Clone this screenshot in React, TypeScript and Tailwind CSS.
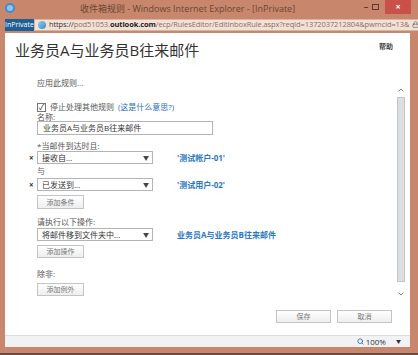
import { ChevronUp, ChevronDown, Lock, Search } from 'lucide-react';

const font = { fontFamily: '"Open Sans", "Noto Sans CJK SC", sans-serif' };

function Select({ label }: { label: string }) {
  return (
    <div className="flex h-[13px] w-[116px] items-center justify-between border border-[#b4b4b4] bg-white pl-[4px] pr-[3px] text-[8px] leading-none text-[#333]">
      <span>{label}</span>
      <span className="text-[6px] text-[#444]">▼</span>
    </div>
  );
}

function Btn({ label, w = 'w-[47px]', h = 'h-[14px]' }: { label: string; w?: string; h?: string }) {
  return (
    <div className={`flex ${w} ${h} items-center justify-center border border-[#c4c4c4] bg-gradient-to-b from-white to-[#eeeeee] text-[7px] leading-none text-[#777]`}>
      {label}
    </div>
  );
}

export default function App() {
  return (
    <div className="flex h-[355px] w-[418px] flex-col overflow-hidden bg-[#c8876c]" style={font}>
      {/* title bar */}
      <div className="relative flex h-[16px] items-center">
        <div className="ml-[5px] h-[10px] w-[10px] rounded-full border-2 border-[#3a8fd6] bg-[#8cc6ef]" />
        <div className="flex-1 text-center text-[9px] leading-none text-[#6a4636]">
          收件箱规则 - Windows Internet Explorer - [InPrivate]
        </div>
        <div className="flex h-[16px] items-start">
          <span className="mt-[2px] w-[12px] text-center text-[9px] font-bold leading-none text-[#5a3a2e]">–</span>
          <span className="mr-[6px] mt-[4px] h-[6px] w-[7px] border border-[#5a3a2e]" />
          <div className="flex h-[14px] w-[26px] items-center justify-center bg-[#c9514a] text-[9px] font-bold text-white">×</div>
          <span className="w-[7px]" />
        </div>
      </div>
      {/* address bar */}
      <div className="flex h-[17px] items-center pl-[5px] pr-[6px]">
        <div className="flex h-[12px] w-[33px] items-center justify-center bg-[#1e5f96] text-[7px] leading-none text-white">InPrivate</div>
        <div className="flex h-[12px] flex-1 items-center gap-[3px] border border-[#d9b3a2] bg-[#f2e1d7] pl-[3px] pr-[2px] text-[7.5px] leading-none text-[#8a7066]">
          <span className="h-[8px] w-[8px] shrink-0 rounded-full bg-gradient-to-br from-[#8fd1f2] to-[#3c88c2]" />
          <span className="flex-1 whitespace-nowrap tracking-[-0.1px]">
            <span className="text-[#333]">https://</span>pod51053.<span className="font-bold text-[#222]">outlook.com</span>/ecp/RulesEditor/EditInboxRule.aspx?reqId=1372037212804&amp;pwmcid=13&amp;
          </span>
          <Lock size={7} className="shrink-0 text-[#555]" />
        </div>
      </div>
      {/* page */}
      <div className="mx-[5px] mr-[8px] flex h-[302px] flex-col bg-white">
        <div className="flex h-[37px] items-start justify-between pl-[10px] pr-[17px] pt-[9px]">
          <div className="text-[15px] leading-[17px] text-[#333]">业务员A与业务员B往来邮件</div>
          <div className="pt-[1px] text-[7px] font-bold leading-none text-[#444]">帮助</div>
        </div>
        <div className="flex h-[233px]">
          <div className="flex flex-1 flex-col pl-[32px] text-[8px] leading-none text-[#555]">
            <div className="mt-[9px] h-[10px]">应用此规则...</div>
            <div className="mt-[13px] flex h-[10px] items-center gap-[4px]">
              <div className="flex h-[9px] w-[9px] items-center justify-center border border-[#777] bg-white text-[8px] leading-none text-[#222]">✓</div>
              <span className="text-[#555]">停止处理其他规则</span>
              <span className="text-[#2a6fb8]">(这是什么意思?)</span>
            </div>
            <div className="flex h-[9px] items-center">名称:</div>
            <div className="flex h-[14px] w-[176px] items-center border border-[#b4b4b4] pl-[5px] text-[8px] text-[#333]">
              业务员A与业务员B往来邮件
            </div>
            <div className="mt-[6px] flex h-[10px] items-center">*当邮件到达时且:</div>
            <div className="relative flex items-center">
              <span className="absolute left-[-8px] text-[8px] font-bold text-[#333]">×</span>
              <Select label="接收自..." />
              <span className="ml-[24px] text-[8px] font-bold text-[#2a78c0]">'测试帐户-01'</span>
            </div>
            <div className="mt-[2px] flex h-[10px] items-center">与</div>
            <div className="relative mt-[2px] flex items-center">
              <span className="absolute left-[-8px] text-[8px] font-bold text-[#333]">×</span>
              <Select label="已发送到..." />
              <span className="ml-[24px] text-[8px] font-bold text-[#2a78c0]">'测试用户-02'</span>
            </div>
            <div className="mt-[4px]">
              <Btn label="添加条件" />
            </div>
            <div className="mt-[8px] flex h-[10px] items-center">请执行以下操作:</div>
            <div className="mt-[1px] flex items-center">
              <Select label="将邮件移到文件夹中..." />
              <span className="ml-[24px] text-[8px] font-bold text-[#2a78c0]">业务员A与业务员B往来邮件</span>
            </div>
            <div className="mt-[4px]">
              <Btn label="添加操作" h="h-[13px]" />
            </div>
            <div className="mt-[11px] flex h-[10px] items-center">除非:</div>
            <div className="mt-[4px]">
              <Btn label="添加例外" h="h-[13px]" />
            </div>
          </div>
          {/* scrollbar */}
          <div className="mr-[5px] flex w-[8px] flex-col items-center">
            <ChevronUp size={8} className="mt-[16px] text-[#666]" strokeWidth={2.5} />
            <div className="mt-[3px] h-[185px] w-[8px] border border-[#c2c6c8] bg-[#dcdfe1]" />
            <ChevronDown size={8} className="mt-[8px] text-[#666]" strokeWidth={2.5} />
          </div>
        </div>
        <div className="flex flex-1 items-start justify-end gap-[6px] pr-[18px] pt-[7px]">
          <Btn label="保存" w="w-[55px]" h="h-[13px]" />
          <Btn label="取消" w="w-[55px]" h="h-[13px]" />
        </div>
      </div>
      {/* status bar */}
      <div className="mx-[5px] mr-[8px] flex h-[12px] items-center justify-end border-t border-[#dcdcdc] bg-[#f1f2f4] pr-[9px] text-[8px] leading-none text-[#333]">
        <Search size={7} className="mr-[2px] text-[#3a6fb0]" strokeWidth={3} />
        <span>100%</span>
        <span className="ml-[10px] text-[5px]">▼</span>
      </div>
      <div className="flex-1 border-b-2 border-[#6b4a40]" />
    </div>
  );
}
